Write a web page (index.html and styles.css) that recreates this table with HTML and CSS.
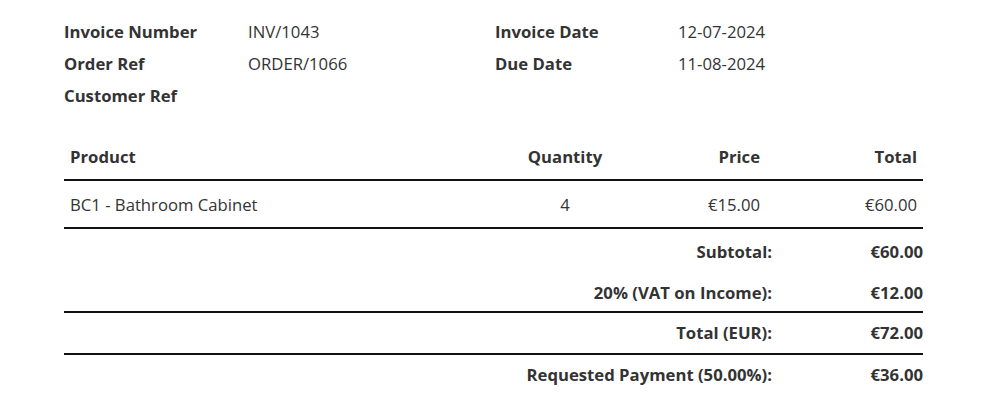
FILE: index.html
```html
<!DOCTYPE html>
<html lang="en">
<head>
<meta charset="utf-8">
<title>Invoice</title>
<link rel="stylesheet" href="styles.css">
</head>
<body>
<div class="page">
  <div class="meta">
    <div class="label">Invoice Number</div>
    <div class="value">INV/1043</div>
    <div class="label">Invoice Date</div>
    <div class="value">12-07-2024</div>
    <div class="label">Order Ref</div>
    <div class="value">ORDER/1066</div>
    <div class="label">Due Date</div>
    <div class="value">11-08-2024</div>
    <div class="label">Customer Ref</div>
    <div class="value"></div>
  </div>

  <div class="lines">
    <div class="row head">
      <div class="c product">Product</div>
      <div class="c qty">Quantity</div>
      <div class="c price">Price</div>
      <div class="c total">Total</div>
    </div>
    <div class="row item">
      <div class="c product">BC1 - Bathroom Cabinet</div>
      <div class="c qty">4</div>
      <div class="c price">€15.00</div>
      <div class="c total">€60.00</div>
    </div>
  </div>

  <div class="totals">
    <div class="trow sub">
      <div class="tl">Subtotal:</div>
      <div class="tv">€60.00</div>
    </div>
    <div class="trow sub ruled">
      <div class="tl">20% (VAT on Income):</div>
      <div class="tv">€12.00</div>
    </div>
    <div class="trow grand ruled">
      <div class="tl">Total (EUR):</div>
      <div class="tv">€72.00</div>
    </div>
    <div class="trow grand">
      <div class="tl">Requested Payment (50.00%):</div>
      <div class="tv">€36.00</div>
    </div>
  </div>
</div>
</body>
</html>
```

FILE: styles.css
```css
* { box-sizing: border-box; }

html, body {
  margin: 0;
  background: #ffffff;
}

body {
  font-family: "Open Sans", "Noto Sans", sans-serif;
  font-size: 16.7px;
  color: #333333;
}

.page {
  width: 986px;
  padding: 16px 63px 0 64px;
}

.meta {
  display: grid;
  grid-template-columns: 184px 247px 183px 1fr;
  line-height: 32px;
}

.label {
  font-weight: 700;
}

.lines {
  margin-top: 21px;
}

.row {
  display: grid;
  grid-template-columns: 426px 150px 126px 1fr;
  border-bottom: 2px solid #111111;
}

.c {
  padding: 13px 6px 11px;
  line-height: 22px;
}

.head .c {
  font-weight: 700;
}

.qty { text-align: center; }
.price, .total { text-align: right; }

.totals {
  font-weight: 700;
}

.trow {
  display: grid;
  grid-template-columns: 1fr 151px;
  line-height: 22px;
}

.trow.sub {
  padding: 12px 0 7px;
}

.trow.grand {
  padding: 9px 0;
}

.trow.ruled {
  border-bottom: 2px solid #111111;
}

.tl, .tv {
  text-align: right;
}
```
